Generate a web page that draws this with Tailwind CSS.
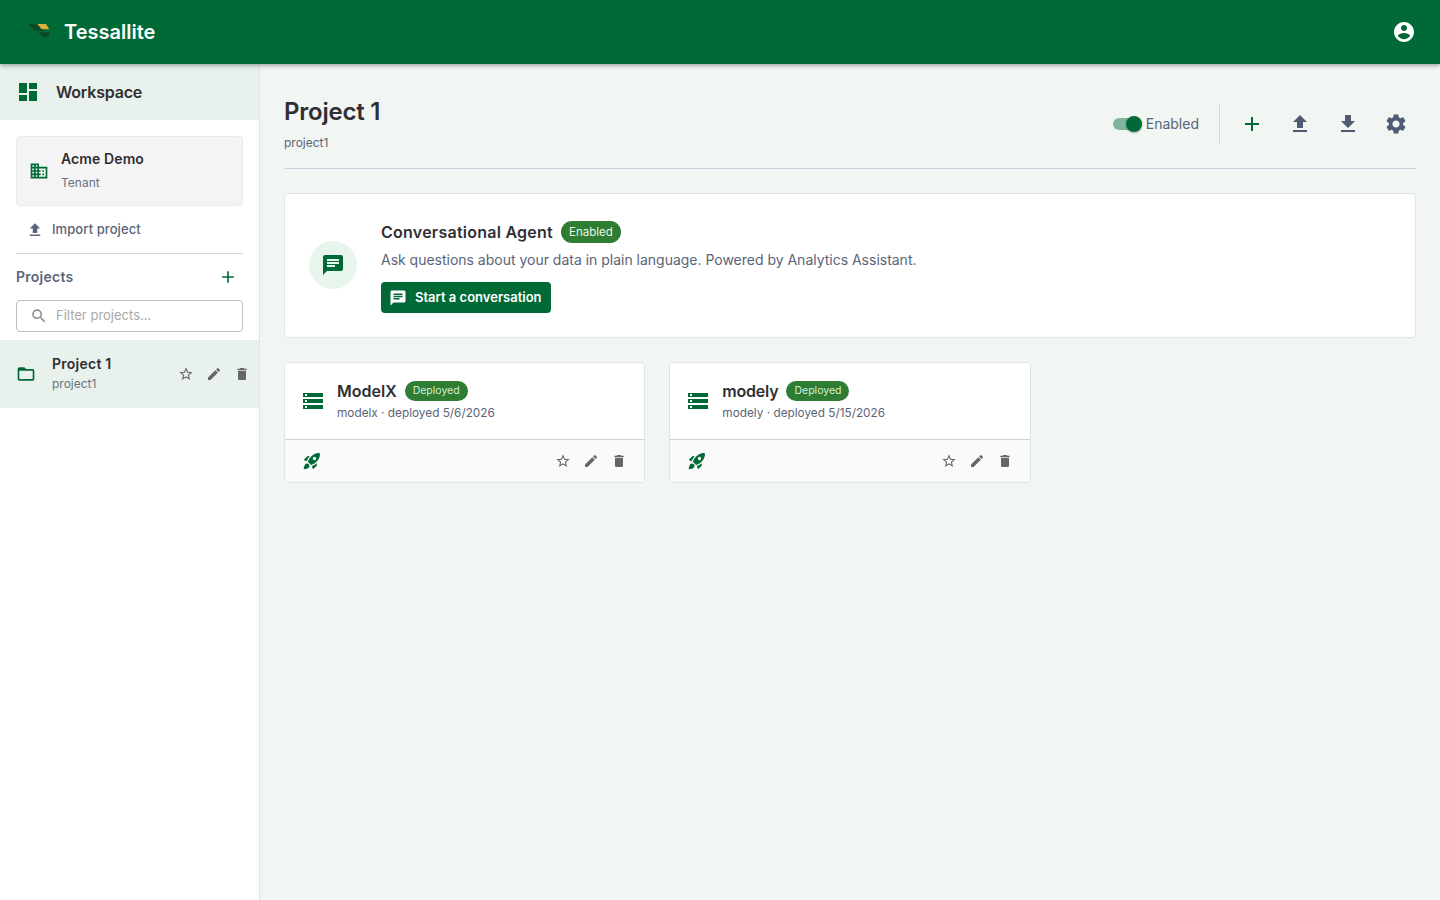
<!DOCTYPE html>
<html lang="en">
<head>
<meta charset="utf-8">
<title>Tessallite</title>
<script src="https://cdn.jsdelivr.net/npm/@tailwindcss/browser@4"></script>
</head>
<body class="font-['Inter',sans-serif] bg-[#f1f6f3] text-[#2f2f33]">
<div class="flex flex-col h-[900px] w-[1440px] overflow-hidden">
  <header class="relative z-10 flex h-16 shrink-0 items-center justify-between bg-[#006a37] pl-[26px] pr-6 shadow-[0_2px_4px_rgba(0,0,0,0.3)]">
    <div class="flex items-center gap-[12px]">
      <svg class="w-[26px] h-[18px]" viewBox="0 0 26 18"><polygon points="2,1 11.3,1 19,8 9,8" fill="#0c4a28"/><polygon points="11.3,1 20,1 23.3,6.3 15.7,6.3" fill="#d8b33c"/><polygon points="12,9 23,9 23.3,14 17,14" fill="#0c4a28"/></svg>
      <span class="text-[20px] font-semibold leading-7 text-white">Tessallite</span>
    </div>
    <svg class="w-6 h-6 fill-white" viewBox="0 0 24 24"><path d="M12 2C6.48 2 2 6.48 2 12s4.48 10 10 10 10-4.48 10-10S17.52 2 12 2zm0 3c1.66 0 3 1.34 3 3s-1.34 3-3 3-3-1.34-3-3 1.34-3 3-3zm0 14.2c-2.5 0-4.71-1.28-6-3.22.03-1.99 4-3.08 6-3.08 1.99 0 5.97 1.09 6 3.08-1.29 1.94-3.5 3.22-6 3.22z"/></svg>
  </header>
  <div class="flex flex-1 min-h-0">
    <aside class="w-[260px] shrink-0 border-r border-[#dfe3e6] bg-white">
      <div class="flex h-14 items-center gap-4 bg-[#e9f1ed] pl-4">
        <svg class="w-6 h-6 fill-[#006a37]" viewBox="0 0 24 24"><path d="M3 13h8V3H3v10zm0 8h8v-6H3v6zm10 0h8V11h-8v10zm0-18v6h8V3h-8z"/></svg>
        <span class="text-base font-semibold tracking-[-0.2px] text-[#2f2f33]">Workspace</span>
      </div>
      <div class="px-4 pt-4">
        <div class="flex h-[70px] items-center gap-3 rounded border border-[#e8eaec] bg-[#f4f4f4] pl-[12px]">
          <svg class="w-5 h-5 fill-[#006a37]" viewBox="0 0 24 24"><path d="M12 7V3H2v18h20V7H10zM6 19H4v-2h2v2zm0-4H4v-2h2v2zm0-4H4V9h2v2zm0-4H4V5h2v2zm4 12H8v-2h2v2zm0-4H8v-2h2v2zm0-4H8V9h2v2zm0-4H8V5h2v2zm10 12h-8v-2h2v-2h-2v-2h2v-2h-2V9h8v10zm-2-8h-2v2h2v-2zm0 4h-2v2h2v-2z"/></svg>
          <div>
            <div class="text-sm font-semibold leading-5 tracking-[0.1px] text-[#2f2f33]">Acme Demo</div>
            <div class="mt-1 text-xs leading-5 text-[#6b7280]">Tenant</div>
          </div>
        </div>
        <div class="flex h-[48px] items-center gap-2 border-b border-[#cbd5e0] pl-[10px]">
          <svg class="w-[18px] h-[18px] fill-[#5a6478]" viewBox="0 0 24 24"><path d="M9 16h6v-6h4l-7-7-7 7h4zm-4 2h14v2H5z"/></svg>
          <span class="text-[13px] font-medium tracking-[0.08px] text-[#5a6478]">Import project</span>
        </div>
        <div class="flex h-[46px] items-center justify-between pr-[5px]">
          <span class="text-sm font-semibold tracking-[0.25px] text-[#5a6478]">Projects</span>
          <svg class="w-5 h-5 fill-[#006a37]" viewBox="0 0 24 24"><path d="M19 13h-6v6h-2v-6H5v-2h6V5h2v6h6v2z"/></svg>
        </div>
        <div class="flex h-8 items-center gap-2 rounded border border-[#b9bfc6] bg-white pl-[13px]">
          <svg class="w-[18px] h-[18px] fill-[#8c8c8c]" viewBox="0 0 24 24"><path d="M15.5 14h-.79l-.28-.27C15.41 12.59 16 11.11 16 9.5 16 5.91 13.09 3 9.5 3S3 5.91 3 9.5 5.91 16 9.5 16c1.61 0 3.09-.59 4.23-1.57l.27.28v.79l5 4.99L20.49 19l-4.99-5zm-6 0C7.01 14 5 11.99 5 9.5S7.01 5 9.5 5 14 7.01 14 9.5 11.99 14 9.5 14z"/></svg>
          <span class="text-[13px] text-[#a8a8a8]">Filter projects...</span>
        </div>
      </div>
      <div class="mt-2 flex h-[68px] items-center bg-[#e9f1ed] pl-4 pr-[9px]">
        <svg class="w-5 h-5 fill-[#006a37]" viewBox="0 0 24 24"><path d="M20 6h-8l-2-2H4c-1.1 0-1.99.9-1.99 2L2 18c0 1.1.9 2 2 2h16c1.1 0 2-.9 2-2V8c0-1.1-.9-2-2-2zm0 12H4V8h16v10z"/></svg>
        <div class="ml-4 flex-1">
          <div class="text-sm font-semibold leading-5 tracking-[0.25px] text-[#2f2f33]">Project 1</div>
          <div class="text-xs leading-5 text-[#6b7280]">project1</div>
        </div>
        <div class="flex items-center gap-3">
          <svg class="w-4 h-4 fill-[#666]" viewBox="0 0 24 24"><path d="M22 9.24l-7.19-.62L12 2 9.19 8.63 2 9.24l5.46 4.73L5.82 21 12 17.27 18.18 21l-1.63-7.03L22 9.24zM12 15.4l-3.76 2.27 1-4.28-3.32-2.88 4.38-.38L12 6.1l1.71 4.04 4.38.38-3.32 2.88 1 4.28L12 15.4z"/></svg>
          <svg class="w-4 h-4 fill-[#666]" viewBox="0 0 24 24"><path d="M3 17.25V21h3.75L17.81 9.94l-3.75-3.75L3 17.25zM20.71 7.04c.39-.39.39-1.02 0-1.41l-2.34-2.34c-.39-.39-1.02-.39-1.41 0l-1.83 1.83 3.75 3.75 1.83-1.83z"/></svg>
          <svg class="w-4 h-4 fill-[#666]" viewBox="0 0 24 24"><path d="M6 19c0 1.1.9 2 2 2h8c1.1 0 2-.9 2-2V7H6v12zM19 4h-3.5l-1-1h-5l-1 1H5v2h14V4z"/></svg>
        </div>
      </div>
    </aside>
    <main class="flex-1 min-w-0 px-6">
      <div class="flex h-[105px] items-center justify-between border-b border-[#c8d4e0] pt-[23px] pb-[6px]">
        <div>
          <h1 class="text-2xl leading-8 font-semibold tracking-[-0.22px] text-[#2f2f33]">Project 1</h1>
          <div class="mt-[5px] text-xs leading-5 text-[#5a6478]">project1</div>
        </div>
        <div class="-mt-[2px] flex items-center pr-2">
          <div class="relative mr-[4px] h-5 w-[29px]">
            <div class="absolute left-0 top-[4px] h-3 w-[29px] rounded-full bg-[#7fb59c]"></div>
            <div class="absolute right-0 top-[2px] h-4 w-4 rounded-full bg-[#006a37] shadow-[0_1px_2px_rgba(0,0,0,0.3)]"></div>
          </div>
          <span class="mr-5 text-sm text-[#5a6478]">Enabled</span>
          <div class="mr-5 h-10 w-px bg-[#d0d8e0]"></div>
          <div class="flex items-center gap-6">
            <svg class="w-6 h-6 fill-[#006a37]" viewBox="0 0 24 24"><path d="M19 13h-6v6h-2v-6H5v-2h6V5h2v6h6v2z"/></svg>
            <svg class="w-6 h-6 fill-[#4f5b70]" viewBox="0 0 24 24"><path d="M9 16h6v-6h4l-7-7-7 7h4zm-4 2h14v2H5z"/></svg>
            <svg class="w-6 h-6 fill-[#4f5b70]" viewBox="0 0 24 24"><path d="M19 9h-4V3H9v6H5l7 7 7-7zM5 18v2h14v-2H5z"/></svg>
            <svg class="w-6 h-6 fill-[#4f5b70]" viewBox="0 0 24 24"><path d="M19.14 12.94c.04-.3.06-.61.06-.94 0-.32-.02-.64-.07-.94l2.03-1.58c.18-.14.23-.41.12-.61l-1.92-3.32c-.12-.22-.37-.29-.59-.22l-2.39.96c-.5-.38-1.03-.7-1.62-.94l-.36-2.54c-.04-.24-.24-.41-.48-.41h-3.84c-.24 0-.43.17-.47.41l-.36 2.54c-.59.24-1.13.57-1.62.94l-2.39-.96c-.22-.08-.47 0-.59.22L2.74 8.87c-.12.21-.08.47.12.61l2.03 1.58c-.05.3-.09.63-.09.94s.02.64.07.94l-2.03 1.58c-.18.14-.23.41-.12.61l1.92 3.32c.12.22.37.29.59.22l2.39-.96c.5.38 1.03.7 1.62.94l.36 2.54c.05.24.24.41.48.41h3.84c.24 0 .44-.17.47-.41l.36-2.54c.59-.24 1.13-.56 1.62-.94l2.39.96c.22.08.47 0 .59-.22l1.92-3.32c.12-.22.07-.47-.12-.61l-2.01-1.58zM12 15.6c-1.98 0-3.6-1.62-3.6-3.6s1.62-3.6 3.6-3.6 3.6 1.62 3.6 3.6-1.62 3.6-3.6 3.6z"/></svg>
          </div>
        </div>
      </div>
      <section class="mt-6 flex h-[145px] items-center gap-6 rounded border border-[#e2e5e7] bg-white pl-6">
        <div class="mb-px flex h-12 w-12 items-center justify-center rounded-full bg-[#e8f5ec]">
          <svg class="w-6 h-6 fill-[#006a37]" viewBox="0 0 24 24"><path d="M20 2H4c-1.1 0-1.99.9-1.99 2L2 22l4-4h14c1.1 0 2-.9 2-2V4c0-1.1-.9-2-2-2zM6 9h12v2H6V9zm8 5H6v-2h8v2zm4-6H6V6h12v2z"/></svg>
        </div>
        <div class="mt-[3px]">
          <div class="flex items-center gap-2">
            <span class="text-base font-semibold leading-[22px] tracking-[0.25px] text-[#2f2f33]">Conversational Agent</span>
            <span class="flex h-[22px] items-center rounded-full bg-[#2e7d32] px-2 pt-px text-[11.5px] text-[#e8f5e9]">Enabled</span>
          </div>
          <p class="mt-[7px] text-sm leading-5 tracking-[-0.012px] text-[#5a6478]">Ask questions about your data in plain language. Powered by Analytics Assistant.</p>
          <button class="mt-3 flex h-[31px] items-center gap-2 rounded bg-[#006a37] pl-[8px] pr-[9px] text-[13px] font-semibold text-white">
            <svg class="w-[18px] h-[18px] fill-white" viewBox="0 0 24 24"><path d="M20 2H4c-1.1 0-1.99.9-1.99 2L2 22l4-4h14c1.1 0 2-.9 2-2V4c0-1.1-.9-2-2-2zM6 9h12v2H6V9zm8 5H6v-2h8v2zm4-6H6V6h12v2z"/></svg>
            Start a conversation
          </button>
        </div>
      </section>
      <div class="mt-6 grid grid-cols-3 gap-6">
        <article class="overflow-hidden rounded border border-[#e2e5e7] bg-white">
          <div class="flex h-[77px] items-center gap-3 border-b border-[#cbd5e0] pb-[2px] pl-4">
            <svg class="mt-[2px] w-6 h-6 fill-[#006a37]" viewBox="0 0 24 24"><path d="M2 20h20v-4H2v4zm2-3h2v2H4v-2zM2 4v4h20V4H2zm4 3H4V5h2v2zm-4 7h20v-4H2v4zm2-3h2v2H4v-2z"/></svg>
            <div>
              <div class="flex items-center gap-2">
                <span class="text-base font-semibold leading-6 text-[#2f2f33]">ModelX</span>
                <span class="flex h-5 items-center rounded-full bg-[#2e7d32] px-2 text-[10.5px] text-[#d6ecd8]">Deployed</span>
              </div>
              <div class="mt-[2px] text-[11.8px] leading-4 text-[#5a6478]">modelx · deployed 5/6/2026</div>
            </div>
          </div>
          <div class="flex h-[42px] items-center justify-between bg-[#fafafa] pl-[17px] pr-[17px]">
            <svg class="w-5 h-5 fill-[#006a37]" viewBox="0 0 24 24"><path d="M9.19 6.35c-2.04 2.29-3.44 5.58-3.57 5.89L2 10.69l4.05-4.05c.47-.47 1.15-.68 1.81-.55l1.33.26zM11.17 17s3.74-1.55 5.89-3.7c5.4-5.4 4.5-9.62 4.21-10.57-.95-.3-5.17-1.19-10.57 4.21C8.55 9.09 7 12.83 7 12.83L11.17 17zm6.48-2.19c-2.29 2.04-5.58 3.44-5.89 3.57L13.31 22l4.05-4.05c.47-.47.68-1.15.55-1.81l-.26-1.33zM9 18c0 .83-.34 1.58-.88 2.12C6.94 21.3 2 22 2 22s.7-4.94 1.88-6.12C4.42 15.34 5.17 15 6 15c1.66 0 3 1.34 3 3zm4-9c0-1.1.9-2 2-2s2 .9 2 2-.9 2-2 2-2-.9-2-2z"/></svg>
            <div class="flex items-center gap-3">
              <svg class="w-4 h-4 fill-[#666]" viewBox="0 0 24 24"><path d="M22 9.24l-7.19-.62L12 2 9.19 8.63 2 9.24l5.46 4.73L5.82 21 12 17.27 18.18 21l-1.63-7.03L22 9.24zM12 15.4l-3.76 2.27 1-4.28-3.32-2.88 4.38-.38L12 6.1l1.71 4.04 4.38.38-3.32 2.88 1 4.28L12 15.4z"/></svg>
              <svg class="w-4 h-4 fill-[#666]" viewBox="0 0 24 24"><path d="M3 17.25V21h3.75L17.81 9.94l-3.75-3.75L3 17.25zM20.71 7.04c.39-.39.39-1.02 0-1.41l-2.34-2.34c-.39-.39-1.02-.39-1.41 0l-1.83 1.83 3.75 3.75 1.83-1.83z"/></svg>
              <svg class="w-4 h-4 fill-[#666]" viewBox="0 0 24 24"><path d="M6 19c0 1.1.9 2 2 2h8c1.1 0 2-.9 2-2V7H6v12zM19 4h-3.5l-1-1h-5l-1 1H5v2h14V4z"/></svg>
            </div>
          </div>
        </article>
        <article class="overflow-hidden rounded border border-[#e2e5e7] bg-white">
          <div class="flex h-[77px] items-center gap-3 border-b border-[#cbd5e0] pb-[2px] pl-4">
            <svg class="mt-[2px] w-6 h-6 fill-[#006a37]" viewBox="0 0 24 24"><path d="M2 20h20v-4H2v4zm2-3h2v2H4v-2zM2 4v4h20V4H2zm4 3H4V5h2v2zm-4 7h20v-4H2v4zm2-3h2v2H4v-2z"/></svg>
            <div>
              <div class="flex items-center gap-2">
                <span class="text-base font-semibold leading-6 tracking-[-0.2px] text-[#2f2f33]">modely</span>
                <span class="flex h-5 items-center rounded-full bg-[#2e7d32] px-2 text-[10.5px] text-[#d6ecd8]">Deployed</span>
              </div>
              <div class="mt-[2px] text-[11.8px] leading-4 text-[#5a6478]">modely · deployed 5/15/2026</div>
            </div>
          </div>
          <div class="flex h-[42px] items-center justify-between bg-[#fafafa] pl-[17px] pr-[17px]">
            <svg class="w-5 h-5 fill-[#006a37]" viewBox="0 0 24 24"><path d="M9.19 6.35c-2.04 2.29-3.44 5.58-3.57 5.89L2 10.69l4.05-4.05c.47-.47 1.15-.68 1.81-.55l1.33.26zM11.17 17s3.74-1.55 5.89-3.7c5.4-5.4 4.5-9.62 4.21-10.57-.95-.3-5.17-1.19-10.57 4.21C8.55 9.09 7 12.83 7 12.83L11.17 17zm6.48-2.19c-2.29 2.04-5.58 3.44-5.89 3.57L13.31 22l4.05-4.05c.47-.47.68-1.15.55-1.81l-.26-1.33zM9 18c0 .83-.34 1.58-.88 2.12C6.94 21.3 2 22 2 22s.7-4.94 1.88-6.12C4.42 15.34 5.17 15 6 15c1.66 0 3 1.34 3 3zm4-9c0-1.1.9-2 2-2s2 .9 2 2-.9 2-2 2-2-.9-2-2z"/></svg>
            <div class="flex items-center gap-3">
              <svg class="w-4 h-4 fill-[#666]" viewBox="0 0 24 24"><path d="M22 9.24l-7.19-.62L12 2 9.19 8.63 2 9.24l5.46 4.73L5.82 21 12 17.27 18.18 21l-1.63-7.03L22 9.24zM12 15.4l-3.76 2.27 1-4.28-3.32-2.88 4.38-.38L12 6.1l1.71 4.04 4.38.38-3.32 2.88 1 4.28L12 15.4z"/></svg>
              <svg class="w-4 h-4 fill-[#666]" viewBox="0 0 24 24"><path d="M3 17.25V21h3.75L17.81 9.94l-3.75-3.75L3 17.25zM20.71 7.04c.39-.39.39-1.02 0-1.41l-2.34-2.34c-.39-.39-1.02-.39-1.41 0l-1.83 1.83 3.75 3.75 1.83-1.83z"/></svg>
              <svg class="w-4 h-4 fill-[#666]" viewBox="0 0 24 24"><path d="M6 19c0 1.1.9 2 2 2h8c1.1 0 2-.9 2-2V7H6v12zM19 4h-3.5l-1-1h-5l-1 1H5v2h14V4z"/></svg>
            </div>
          </div>
        </article>
      </div>
    </main>
  </div>
</div>
</body>
</html>
